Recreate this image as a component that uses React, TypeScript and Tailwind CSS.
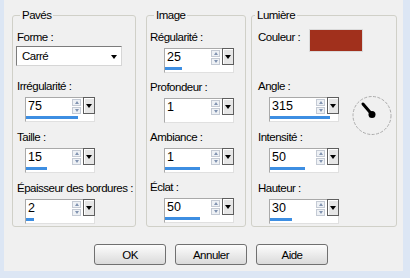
import React from 'react';

const font = 'font-["Liberation_Sans",Arial,sans-serif] text-[11.5px] tracking-[-0.5px] leading-[14px] text-black whitespace-nowrap';

const Down = () => (
    <div className="w-0 h-0 border-l-[3px] border-r-[3px] border-t-[4px] border-l-transparent border-r-transparent border-t-black" />
);

const Spin = ({ value, bar }: { value: string; bar: number }) => (
    <div className="relative w-[70px] h-[25px] bg-white border border-[#a9a9a9] border-r-[#e0e0e0] border-b-[#e0e0e0]">
        <span className="absolute left-[2px] top-[1px] leading-[15px] text-[12.5px] tracking-normal">{value}</span>
        <div className="absolute left-[46px] top-[1px] w-[9px] flex flex-col gap-px">
            <div className="h-[7px] bg-[#eef1f5] border border-[#c4cad4] flex items-center justify-center">
                <div className="w-0 h-0 border-l-[2px] border-r-[2px] border-b-[3px] border-l-transparent border-r-transparent border-b-[#8193b0]" />
            </div>
            <div className="h-[7px] bg-[#eef1f5] border border-[#c4cad4] flex items-center justify-center">
                <div className="w-0 h-0 border-l-[2px] border-r-[2px] border-t-[3px] border-l-transparent border-r-transparent border-t-[#8193b0]" />
            </div>
        </div>
        <div className="absolute left-[57px] -top-px w-[12px] h-[17px] bg-[#e6e6e6] border border-[#5e5e5e] shadow-[inset_1px_1px_0_#ffffff] flex items-center justify-center">
            <Down />
        </div>
        <div className="absolute left-0 bottom-[2px] h-[3px] bg-[#3d8ee2]" style={{ width: bar }} />
    </div>
);

const Field = ({ label, value, bar, indent }: { label: string; value: string; bar: number; indent: string }) => (
    <div className="flex flex-col">
        <div>{label}</div>
        <div className={`mt-[4px] ${indent}`}>
            <Spin value={value} bar={bar} />
        </div>
    </div>
);

const Dial = () => (
    <svg width="42" height="42" viewBox="0 0 42 42">
        <circle cx="21" cy="21.5" r="19" fill="none" stroke="#ababab" strokeWidth="1" strokeDasharray="3 1.5" />
        <line x1="21" y1="20.5" x2="12" y2="10" stroke="#000" strokeWidth="3" strokeLinecap="round" />
        <circle cx="21" cy="20.5" r="3.5" fill="#000" />
    </svg>
);

const App = () => {
    return (
        <div className={`w-[410px] h-[278px] bg-[#dce6f4] ${font}`}>
            <div className="ml-[4px] w-[399px] h-[271px] bg-[#f0f0f0] pt-[8px] flex flex-col">
                <div className="flex pl-[8px]">
                    {/* Pavés */}
                    <fieldset className="w-[124px] h-[219px] border border-[#d0d0c8] rounded-[3px] pl-[4px] pt-[8px]">
                        <legend className="ml-[3px] px-[2px]">Pavés</legend>
                        <div>Forme :</div>
                        <div className="relative -ml-px mt-[2px] w-[106px] h-[20px] bg-white border border-[#7c7c7c] border-r-[#d6d6d6] border-b-[#d6d6d6] flex items-center pl-[5px]">
                            Carré
                            <div className="absolute right-[4px] top-[8px]">
                                <Down />
                            </div>
                        </div>
                        <div className="mt-[13px] flex flex-col gap-[8px]">
                            <Field label="Irrégularité :" value="75" bar={52} indent="ml-[8px]" />
                            <Field label="Taille :" value="15" bar={21} indent="ml-[8px]" />
                            <Field label="Épaisseur des bordures :" value="2" bar={8} indent="ml-[8px]" />
                        </div>
                    </fieldset>

                    {/* Image */}
                    <fieldset className="ml-[10px] w-[100px] h-[219px] border border-[#d0d0c8] rounded-[3px] pl-[3px] pt-[8px]">
                        <legend className="ml-[4px] px-[2px]">Image</legend>
                        <div className="flex flex-col gap-[7px]">
                            <Field label="Régularité :" value="25" bar={17} indent="ml-[14px]" />
                            <Field label="Profondeur :" value="1" bar={0} indent="ml-[14px]" />
                            <Field label="Ambiance :" value="1" bar={35} indent="ml-[14px]" />
                            <Field label="Éclat :" value="50" bar={35} indent="ml-[14px]" />
                        </div>
                    </fieldset>

                    {/* Lumière */}
                    <fieldset className="ml-[5px] w-[146px] h-[219px] border border-[#d0d0c8] rounded-[3px] pl-[6px] pt-[8px]">
                        <legend className="-ml-[3px] px-[2px]">Lumière</legend>
                        <div className="flex items-start">
                            <div className="w-[51px]">Couleur :</div>
                            <div className="-mt-px w-[54px] h-[23px] bg-[#a1301c] border border-[#dadada]" />
                        </div>
                        <div className="mt-[27px] flex flex-col">
                            <div>Angle :</div>
                            <div className="mt-[4px] ml-[11px] flex items-start h-[25px]">
                                <Spin value="315" bar={60} />
                                <div className="ml-[12px] -mt-[3px]">
                                    <Dial />
                                </div>
                            </div>
                        </div>
                        <div className="mt-[8px] flex flex-col gap-[8px]">
                            <Field label="Intensité :" value="50" bar={35} indent="ml-[11px]" />
                            <Field label="Hauteur :" value="30" bar={22} indent="ml-[11px]" />
                        </div>
                    </fieldset>
                </div>

                <div className="mt-[17px] pl-[90px] flex gap-[9px]">
                    {['OK', 'Annuler', 'Aide'].map((t) => (
                        <button
                            key={t}
                            className="w-[72px] h-[21px] rounded-[3px] border border-[#707070] bg-linear-to-b from-[#fdfdfd] to-[#dadada] flex items-center justify-center"
                        >
                            {t}
                        </button>
                    ))}
                </div>
            </div>
        </div>
    );
};

export default App;
